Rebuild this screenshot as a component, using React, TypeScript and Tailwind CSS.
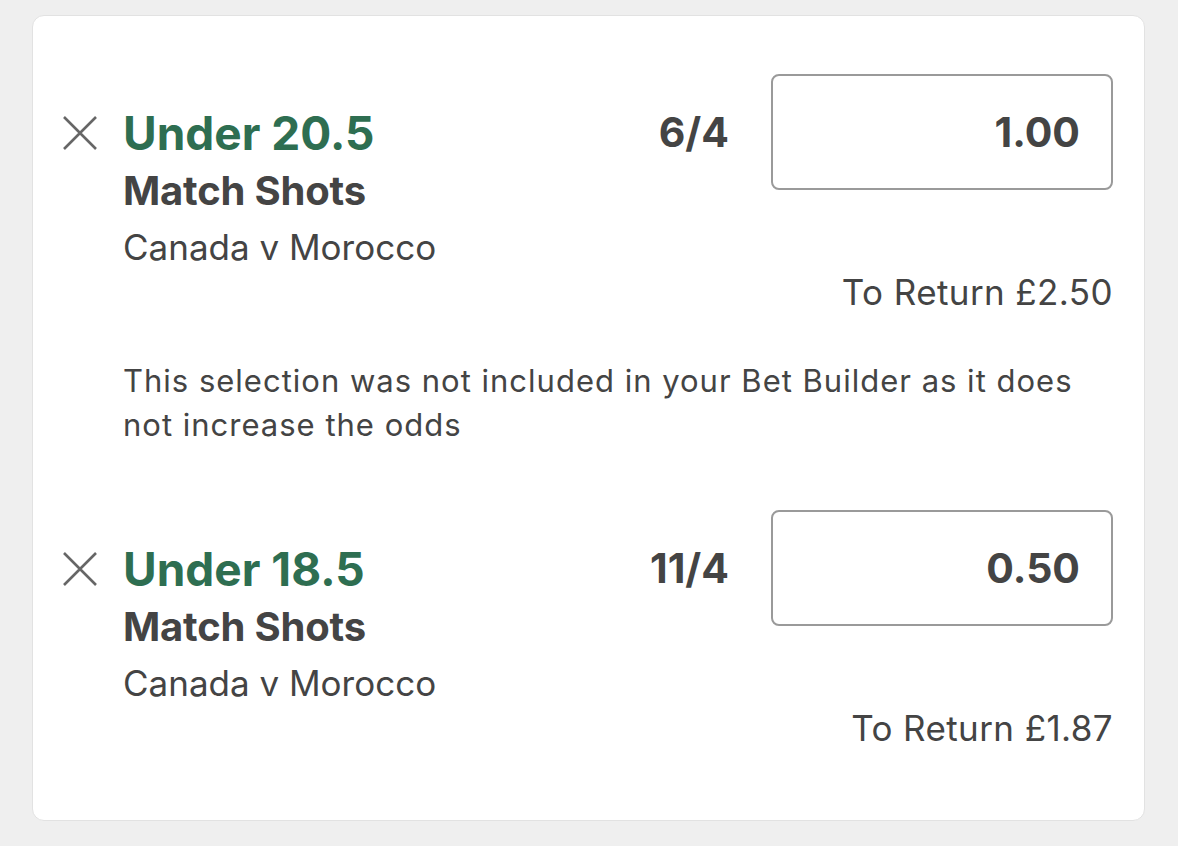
import React from "react";

type Selection = {
  title: string;
  market: string;
  event: string;
  odds: string;
  stake: string;
  toReturn: string;
};

const selections: Selection[] = [
  {
    title: "Under 20.5",
    market: "Match Shots",
    event: "Canada v Morocco",
    odds: "6/4",
    stake: "1.00",
    toReturn: "£2.50",
  },
  {
    title: "Under 18.5",
    market: "Match Shots",
    event: "Canada v Morocco",
    odds: "11/4",
    stake: "0.50",
    toReturn: "£1.87",
  },
];

function CloseIcon() {
  return (
    <svg width="34" height="34" viewBox="0 0 34 34" className="shrink-0">
      <path d="M1 1 L33 33 M33 1 L1 33" stroke="#666" strokeWidth="2.6" strokeLinecap="butt" />
    </svg>
  );
}

function SelectionRow({ s }: { s: Selection }) {
  return (
    <div className="flex items-start justify-between">
      <div className="flex items-start pt-[34px]">
        <div className="flex h-[50px] w-[60px] items-center">
          <CloseIcon />
        </div>
        <div className="flex flex-col">
          <div className="text-[46px] font-bold leading-[50px] text-[#2e6e51]">
            {s.title}
          </div>
          <div className="mt-[5px] text-[40px] font-bold leading-[56px] tracking-[-0.2px] text-[#444]">
            {s.market}
          </div>
          <div className="text-[35px] leading-[56px] text-[#444]">{s.event}</div>
        </div>
      </div>
      <div className="flex flex-col items-end">
        <div className="flex items-center gap-[42px]">
          <div className="pt-[2px] text-[41px] font-bold text-[#444]">{s.odds}</div>
          <div className="flex h-[116px] w-[342px] items-center justify-end rounded-[8px] border-2 border-[#9a9a9a] pt-[2px] pr-[31px] text-[41px] font-bold text-[#444]">
            {s.stake}
          </div>
        </div>
        <div className="mt-[80px] text-[35px] leading-[44px] tracking-[0.4px] text-[#444]">
          To Return {s.toReturn}
        </div>
      </div>
    </div>
  );
}

export default function App() {
  return (
    <div
      className="min-h-[846px] w-[1178px] bg-[#efefef] pt-[15px] pl-[32px]"
      style={{ fontFamily: "Inter, 'Noto Sans', sans-serif" }}
    >
      <div className="w-[1113px] rounded-[12px] border border-[#e2e2e2] bg-white pt-[58px] pr-[31px] pb-[70px] pl-[30px]">
        <SelectionRow s={selections[0]} />
        <p className="mt-[45px] pl-[60px] text-[31px] leading-[44px] tracking-[1px] whitespace-nowrap text-[#444]">
          This selection was not included in your Bet Builder as it does
          <br />
          not increase the odds
        </p>
        <div className="mt-[63px]">
          <SelectionRow s={selections[1]} />
        </div>
      </div>
    </div>
  );
}
